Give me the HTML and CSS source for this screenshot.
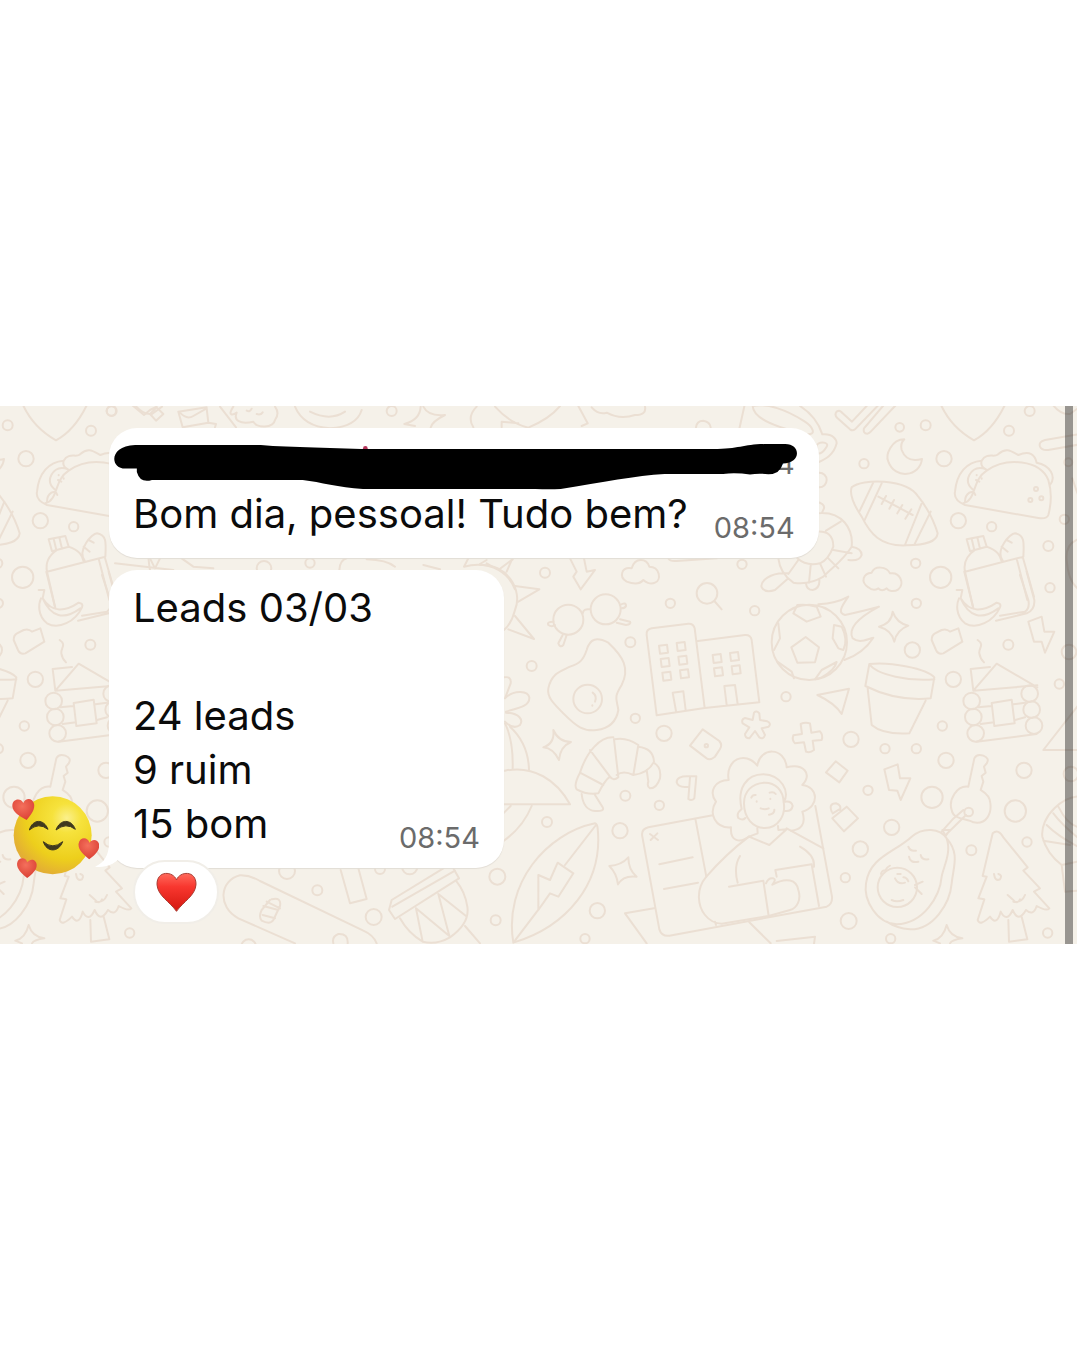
FILE: index.html
```html
<!DOCTYPE html>
<html lang="pt-BR">
<head>
    <meta charset="UTF-8">
    <meta name="viewport" content="width=device-width, initial-scale=1.0">
    <title>Leads 03/03</title>
    <link rel="stylesheet" href="styles.css">
</head>
<body>
    <main class="chat">
        <!--FONDO-->
        <svg class="wallpaper" viewBox="0 0 3231 1614" preserveAspectRatio="xMinYMin slice" aria-hidden="true">
            <defs>
                <g id="doodles">
                    <!-- top right: heart, check, moon, football, taco, float -->
                    <g transform="translate(2160 -18)">
                        <path d="M660 8Q690 80 762 121Q820 90 858 8"/>
                        <path d="M350 35Q360 28 368 40L396 65L452 5M350 35Q342 44 352 54L390 88Q398 94 405 88L485 5M500 5L432 85Q428 100 442 101Q448 100 453 94L528 15"/>
                        <path d="M75 10L55 100M98 18C100 60 180 85 262 103C290 105 280 80 250 62C200 30 140 8 98 18M240 18Q290 50 307 103C340 100 350 120 350 130C340 170 310 180 288 190M288 143C290 120 330 125 320 140Q305 165 290 160"/>
                        <path d="M553 118C515 118 495 165 505 185C525 240 600 230 606 177Q560 190 545 150Q540 130 553 118Z"/>
                        <path d="M395 262C425 235 560 235 595 290Q635 340 653 400C650 425 620 435 560 436C480 440 450 400 425 350Q385 290 395 262ZM460 247L418 335M485 250L433 362M607 305L556 432M632 335L583 434M475 290L578 345M498 288L485 312M522 300L508 326M547 315L532 340M574 328L556 356"/>
                        <path d="M730 310C770 300 755 240 800 212C860 170 960 180 985 240Q1000 290 985 345Q980 358 955 354L735 315Q700 300 705 275C710 220 740 185 785 182C800 155 825 175 835 162C860 140 875 155 895 165C930 150 945 165 950 188C990 195 1010 230 990 255M785 182Q780 200 798 208Q765 195 748 225Q735 250 760 270M735 305C735 280 760 265 766 285"/>
                        <circle cx="948" cy="267" r="6"/><circle cx="931" cy="300" r="6"/><circle cx="964" cy="295" r="6"/>
                        <path d="M770 225v1M785 235v1M768 240l10 5"/>
                        <path d="M288 340C370 330 400 390 395 440C370 480 340 500 310 530Q270 555 220 548Q180 520 175 475M288 395Q340 390 340 440Q325 480 300 490Q260 500 232 475M318 392L362 365M340 450L395 460M325 475L355 505M300 490L318 530M272 497L267 548M235 480L205 522M395 440Q425 445 425 465Q418 485 385 480M288 305Q315 310 312 325L306 338M203 520C150 515 120 545 125 562Q135 580 165 570L205 535M258 550Q260 570 278 570Q300 565 298 540"/>
                        <circle cx="298" cy="240" r="22"/>
                        <circle cx="539" cy="82" r="13"/><circle cx="617" cy="76" r="15"/><circle cx="867" cy="92" r="15"/><circle cx="929" cy="33" r="15"/><circle cx="432" cy="191" r="14"/><circle cx="672" cy="176" r="23"/><circle cx="715" cy="362" r="23"/><circle cx="815" cy="380" r="14"/><circle cx="587" cy="490" r="14"/><circle cx="662" cy="532" r="32"/><circle cx="985" cy="438" r="15"/><circle cx="66" cy="493" r="14"/><circle cx="1045" cy="187" r="12"/><circle cx="1033" cy="358" r="14"/>
                        <path d="M995 10Q1020 45 1050 42L1080 20M1080 102L975 120Q955 125 960 140Q965 152 985 150L1080 133M1057 235Q1065 260 1080 300M1080 415Q1035 430 1040 480Q1045 550 1080 570"/>
                        <path d="M445 562C420 545 430 520 455 518C465 495 500 500 510 520C540 515 555 550 535 568C520 578 505 572 500 565Q485 576 475 565Q460 575 445 562Z"/>
                        <!-- jar and bread -->
                        <path d="M735 515L910 470M740 418L790 408L800 440L750 454ZM755 416l8 34M772 412l8 34M735 515C728 480 750 460 765 450M800 440C840 455 840 470 845 485M848 482C825 450 870 400 885 400C915 405 912 430 910 470M860 420l15 8M845 440l18 15M735 515L760 625M890 476L922 600M908 470L942 590"/>
                    </g>
                    <!-- top strip -->
                    <g transform="translate(0 -18)">
                        <path d="M390 10L432 45L450 30L470 20M470 22L490 42L468 62L450 42ZM535 35L620 22M535 35L548 82M540 38Q560 60 580 48L620 25L625 68L648 72L645 82M548 82L625 68M660 20L708 82M700 20C680 50 700 45 710 38C700 60 720 75 760 65C770 85 820 85 825 60Q840 40 825 20M740 32q10 5 15-6M770 42q12 4 18-5M885 20Q910 80 990 85Q1070 80 1085 30M930 35Q990 65 1035 35"/>
                        <circle cx="334" cy="33" r="14"/>
                        <path d="M345 490L520 510M450 475L465 505L480 475M545 475L580 500L640 505"/><circle cx="792" cy="505" r="22"/><circle cx="930" cy="489" r="14"/><path d="M1018 510Q1020 480 1040 475"/>
                    </g>
                    <g transform="translate(1080 -18)">
                        <circle cx="95" cy="33" r="15"/>
                        <path d="M182 20Q180 60 133 72L165 78M190 20Q205 50 255 45Q215 65 212 83M350 20Q320 50 340 82M405 20Q450 70 505 83Q570 55 600 18M425 82V65L475 70M655 18L683 70L665 78M695 22Q715 45 740 38Q780 60 825 45Q860 45 855 20"/>
                        <path d="M1008 82Q1010 62 1030 62Q1050 65 1052 82M925 475Q930 485 950 483L1070 475M630 475L650 515L640 530L662 568L705 510L680 515L672 475"/>
                        <path d="M325 475L312 500Q370 485 415 510Q450 530 465 568M380 490L415 510L458 478M190 495L240 508M20 478Q80 480 105 500"/>
                        <circle cx="555" cy="518" r="15"/>
                        <path d="M800 545C775 530 785 500 815 505C825 470 860 475 868 500C900 500 905 540 885 548C870 555 855 545 850 540Q835 558 800 545Z"/>
                    </g>
                    <!-- middle: sun, glasses, egg, buildings -->
                    <g transform="translate(1440 462)">
                        <path d="M0 15C80 10 130 90 105 150Q95 190 72 210M105 78L178 88L115 125M105 168L162 237L85 208M0 12L20 0M95 0L80 35"/>
                        <circle cx="571" cy="130" r="14"/><circle cx="824" cy="152" r="14"/><circle cx="451" cy="247" r="15"/><circle cx="155" cy="318" r="15"/><circle cx="466" cy="475" r="14"/><circle cx="552" cy="520" r="23"/>
                        <circle cx="681" cy="100" r="31"/><path d="M703 123L725 148"/>
                        <circle cx="265" cy="179" r="45"/><circle cx="377" cy="148" r="45"/>
                        <path d="M308 160Q310 145 330 148M220 185Q200 185 205 195Q215 202 225 195M248 225L235 250Q240 265 250 255L260 225M420 135Q438 125 438 138Q435 145 424 145M420 178L450 185Q455 192 438 195L410 188"/>
                        <path d="M320 270C330 235 350 230 385 248C430 290 450 325 425 375C400 415 410 415 415 450C410 480 390 505 350 510C310 515 290 500 250 460C220 430 200 410 205 385C215 340 240 335 270 320C300 310 310 300 320 270Z"/>
                        <circle cx="323" cy="417" r="43"/><path d="M338 398Q352 408 345 425M337 436v1"/>
                        <path d="M530 466L500 225Q498 208 515 205L625 191Q640 190 644 205L674 444ZM654 243L795 225Q812 224 815 240L838 427L674 444M588 453L578 398L610 394L617 450M740 435L733 378L765 375L773 432"/>
                        <path d="M537 257l24-3l3 24l-24 3zM590 249l24-3l3 24l-24 3zM542 297l24-3l3 24l-24 3zM595 290l24-3l3 24l-24 3zM547 338l24-3l3 24l-24 3zM600 331l24-3l3 24l-24 3zM698 285l24-3l3 24l-24 3zM750 279l24-3l3 24l-24 3zM702 325l24-3l3 24l-24 3zM755 319l24-3l3 24l-24 3z"/>
                        <path d="M822 458Q830 450 838 460L840 480L862 484Q875 490 866 500L845 505L855 525Q850 540 838 532L825 513L808 535Q795 535 795 522L808 502L788 490Q783 478 795 474L818 480Z"/>
                        <path d="M668 508L718 543Q728 555 720 567L705 590Q690 602 680 595L630 557Z"/><circle cx="679" cy="557" r="5"/>
                        <path d="M220 510Q235 545 273 546Q240 560 237 600Q220 565 190 562Q225 550 220 510Z"/>
                        <path d="M72 352Q95 348 92 370L75 415M75 415C105 385 145 395 148 412C150 440 110 445 78 455M78 458C120 460 130 480 120 495Q100 510 75 485M75 490Q100 540 98 625M90 500Q145 550 147 630"/>
                    </g>
                    <!-- ball, pot, house, banana -->
                    <g transform="translate(2340 462)">
                        <circle cx="88" cy="247" r="113"/>
                        <path d="M77 231L117 262L105 307L52 308L34 262ZM40 160L52 135Q80 132 110 140L122 170L80 185ZM162 195L185 200Q205 240 190 270L175 265L158 235ZM105 358L125 330L170 306Q165 330 125 352ZM-8 305L35 335L42 355M-18 270L0 235L-5 190"/>
                        <path d="M115 133Q170 130 205 110C180 145 175 160 195 165Q240 155 297 140C250 165 200 200 218 235C235 250 260 240 280 233Q250 280 193 300"/>
                        <circle cx="409" cy="130" r="14"/><circle cx="810" cy="83" r="14"/><circle cx="397" cy="270" r="23"/><circle cx="685" cy="254" r="15"/><circle cx="520" cy="358" r="23"/><circle cx="18" cy="410" r="14"/><circle cx="487" cy="498" r="14"/><circle cx="213" cy="538" r="23"/><circle cx="315" cy="566" r="14"/><circle cx="409" cy="566" r="14"/><circle cx="867" cy="276" r="22"/><circle cx="838" cy="372" r="14"/>
                        <path d="M338 155Q350 190 385 197Q350 210 343 245Q335 210 297 200Q335 190 338 155Z"/>
                        <path d="M465 220L485 210Q500 205 510 215L535 205L547 245L490 280Q475 285 468 270L455 240Q455 225 465 220Z"/>
                        <path d="M593 240C615 255 595 265 598 280Q600 295 612 307M572 327L630 321M572 327L580 392M580 392L650 311L772 382M580 392L772 376"/>
                        <circle cx="575" cy="423" r="25"/><circle cx="580" cy="471" r="25"/><circle cx="587" cy="520" r="25"/><circle cx="749" cy="401" r="25"/><circle cx="755" cy="449" r="25"/><circle cx="762" cy="497" r="25"/>
                        <path d="M595 442L635 438M700 433L735 428M602 492L642 487M705 480L735 472M590 545L770 522M635 429L695 419L704 490L643 498Z"/>
                        <path d="M268 312C330 305 440 325 463 352L452 415Q350 425 256 378ZM268 312C290 345 390 365 463 358M263 385L275 495Q310 525 388 520L437 422"/>
                        <path d="M112 405L207 386L185 462Q165 430 112 405Z"/>
                        <path d="M62 492Q75 485 90 490L94 518L120 514Q130 525 125 540L98 542L102 570Q90 580 78 575L72 547L45 550Q35 540 40 526L66 522Z"/>
                        <path d="M530 90H547L542 115C570 160 610 155 650 128Q665 130 660 142C640 185 590 210 555 190C525 165 530 130 537 115M542 115Q580 200 655 145M580 145L553 35M648 182L740 160Q765 150 763 120L740 35M660 167L735 155Q750 145 745 120L720 45"/>
                        <path d="M745 185L785 170L793 215H823L795 278L785 245H762Z"/>
                        <path d="M915 410L790 570H910"/>
                    </g>
                    <!-- lower middle: mushroom, croissant, surfboard -->
                    <g transform="translate(1440 1032)">
                        <path d="M0 75Q40 60 75 62C160 45 230 90 270 163H60M155 168Q130 230 72 272M92 168L70 190"/>
                        <path d="M300 68L370 105M300 68C320 5 360-40 400-38M330 0L390 80Q400 95 415 82L402-32M402-32Q440-40 475-15L460 75M475-10Q520-5 522 35Q505 70 460 75Q430 60 410 75M300 68Q280 105 290 118Q320 135 355 130Q375 90 390 80M305 132Q310 180 345 183Q375 185 368 172L345 135M520 38Q545 50 540 85Q530 115 510 115Q500 110 505 95L500 60"/>
                        <circle cx="436" cy="137" r="15"/><circle cx="538" cy="166" r="14"/><circle cx="201" cy="216" r="15"/><circle cx="420" cy="242" r="23"/><circle cx="52" cy="380" r="24"/><circle cx="352" cy="482" r="23"/><circle cx="315" cy="566" r="14"/>
                        <path d="M345 220C200 250 70 400 100 578C260 530 370 400 353 235Q352 222 345 220ZM348 225L255 345M178 475L100 578M175 480V375L210 390L233 338L280 370L235 440L210 430Z"/>
                        <path d="M445 322Q445 360 470 380Q430 375 414 403Q410 370 388 348Q425 345 445 322Z"/>
                    </g>
                    <!-- woman with the laptop -->
                    <g transform="translate(1890 1002)">
                        <path d="M173 109H199L193 175Q185 184 175 177L180 112M175 109Q140 108 140 127Q145 145 177 140"/>
                        <path d="M248 226L55 262Q32 268 37 290L88 568Q95 590 118 587L590 500Q608 492 606 470L556 198M196 236L229 410M88 373L188 352M102 447L204 428M60 282l24 18M82 280l-20 20M72 505L-15 520L50 610M358 547L422 610"/>
                        <path d="M303 262C255 265 235 220 258 185C235 155 255 120 296 120C285 60 345 30 382 77C390 20 465 20 470 82C520 70 548 100 517 135C565 140 570 200 517 215C530 255 510 270 483 272M303 262C300 305 330 310 357 290"/>
                        <path d="M335 207C320 145 350 103 400 103C455 105 480 155 461 187M461 187C460 150 435 127 403 128C365 130 342 155 342 190C342 235 370 264 405 264C445 264 468 225 461 187M335 207Q318 220 325 234Q338 243 346 234M466 185Q485 183 488 198Q485 215 465 213M382 264L383 280L357 290L418 315L470 268L445 270L444 258M364 173q3-9 13-8M419 158q12-4 18 4M380 184v1M421 176v1M392 205q12 5 24 0M417 224q17-2 16-15"/>
                        <path d="M357 290Q290 340 229 410C195 450 205 500 225 525Q245 550 275 551L415 528M330 348Q310 380 323 428M297 440L400 422L416 528M440 410L436 390L545 373L567 498M408 430Q415 412 430 415Q440 418 427 434C470 410 500 420 505 450C515 480 500 505 480 510L416 528M470 265L580 325M510 320Q555 345 552 380M255 545L258 555"/>
                        <path d="M440 603L555 590L552 612"/>
                    </g>
                    <!-- lower right: key, avocado, tree -->
                    <g transform="translate(2340 1032)">
                        <path d="M167 34L203 62L178 97L138 67ZM157 205L200 170L234 205L192 244ZM155 185Q145 160 168 160Q185 165 180 180M158 190L178 178M313 58L353 43L360 85L391 85L362 150L352 122L327 120Z"/>
                        <circle cx="264" cy="121" r="14"/><circle cx="456" cy="142" r="32"/><circle cx="498" cy="31" r="23"/><circle cx="732" cy="61" r="23"/><circle cx="706" cy="183" r="32"/><circle cx="335" cy="232" r="23"/><circle cx="241" cy="297" r="23"/><circle cx="574" cy="301" r="15"/><circle cx="741" cy="276" r="14"/><circle cx="196" cy="383" r="14"/><circle cx="206" cy="513" r="24"/><circle cx="332" cy="566" r="14"/><circle cx="803" cy="549" r="14"/><circle cx="873" cy="72" r="22"/>
                        <path d="M565 110L583 25Q590 10 610 17Q630 25 620 40L612 50L617 68L605 78L610 95L602 120M565 110C530 105 505 150 515 180C520 210 560 205 580 217C620 225 635 190 631 160C630 135 610 125 602 120"/>
                        <circle cx="566" cy="186" r="13"/><path d="M558 195L500 252M550 180L518 208M518 208L485 245M487 240L510 240L497 258Z"/>
                        <path d="M395 260C430 230 480 235 500 265C515 310 490 350 485 380C480 440 430 520 350 523C290 520 250 450 258 400C270 320 340 310 395 260ZM500 265C540 310 520 350 515 400C510 460 460 540 390 538Q350 535 320 515"/>
                        <circle cx="352" cy="412" r="59"/><path d="M385 290Q390 305 408 302M387 320Q390 340 415 335M422 315Q425 330 445 328M345 385Q355 405 375 398M352 372h10M370 382q10 0 15 12M335 450Q350 458 370 450M303 372Q305 360 315 362Q322 350 330 347M405 405L428 395M405 412L425 432"/>
                        <path d="M638 250Q655 235 670 262L743 352L730 362L780 415L762 425L808 475Q800 485 770 468Q760 500 738 480Q715 520 698 480Q680 520 662 485Q650 530 630 500Q600 530 593 510L613 448L595 445L620 380L608 378ZM685 510L687 575L742 568L725 500M642 372Q645 395 660 388Q668 375 655 372M683 435L700 450Q712 465 720 448M700 455Q725 460 735 435"/>
                        <path d="M500 525Q510 560 547 565Q515 570 510 580M500 525Q490 565 460 572L480 580"/>
                        <path d="M915 140C850 130 780 200 787 260Q800 310 845 345L855 425L915 420M820 190Q850 230 915 280M800 225Q840 265 915 300M790 272L870 285M845 345L915 330M835 170Q860 220 890 230"/>
                    </g>
                    <!-- bottom left: skateboard, drum -->
                    <g transform="translate(660 1182)">
                        <circle cx="201" cy="213" r="24"/><circle cx="292" cy="271" r="15"/><circle cx="461" cy="351" r="24"/><circle cx="827" cy="361" r="15"/><circle cx="480" cy="207" r="15"/><circle cx="569" cy="200" r="23"/><circle cx="86" cy="440" r="22"/>
                        <path d="M55 355C-10 320 0 240 60 226Q90 225 120 243L430 392Q460 405 470 430M55 355L225 430M340 430Q335 410 355 402Q385 400 383 430M155 298Q185 290 180 318L160 360Q150 375 125 362Q115 350 125 330M125 330L150 300M130 318L175 330M128 345L165 355M140 305l40 20M362 210L390 310L440 297L415 205"/>
                        <path d="M507 330L525 357L717 235L700 205M507 330L515 300L670 205M517 320L705 212M540 355Q565 400 608 425Q650 435 690 412Q750 370 742 320Q735 275 710 245M608 425L588 325L688 408L655 282L738 348M735 378L780 430"/>
                    </g>
                </g>
            </defs>
            <use href="#doodles"/>
            <use href="#doodles" x="-2754"/>
        </svg>

        <!--MENSAJES-->
        <div class="message">
            <div class="bubble">
                <div class="sender"><span class="time">4</span></div>
                <div class="content">
                    <p>Bom dia, pessoal! Tudo bem?</p>
                    <time class="time">08:54</time>
                </div>
                <svg class="scribble" viewBox="327 84 2118 390" aria-hidden="true">
                    <circle cx="1092" cy="145" r="7" fill="#b5345a"/>
                    <path d="M405 135H780Q850 141 940 142L1080 147H2130C2210 147 2220 132 2290 132H2345C2393 132 2393 190 2338 190Q2330 222 2295 222Q2265 218 2240 223Q2200 217 2160 221H1985C1900 226 1800 245 1675 266Q1640 268 1600 266H1085C1010 262 960 245 905 239H455Q420 250 410 215V205H375C330 205 325 138 405 135Z"/>
                </svg>
            </div>
        </div>

        <div class="message">
            <svg class="avatar" viewBox="0 0 261 246" role="img" aria-label="Avatar">
                <defs>
                    <radialGradient id="face" cx="68%" cy="28%" r="75%">
                        <stop offset="0" stop-color="#fbf08c"/>
                        <stop offset=".25" stop-color="#f6e23c"/>
                        <stop offset=".7" stop-color="#edcf1c"/>
                        <stop offset="1" stop-color="#e3ae34"/>
                    </radialGradient>
                    <radialGradient id="love" cx="45%" cy="35%" r="65%">
                        <stop offset="0" stop-color="#f4705c"/>
                        <stop offset="1" stop-color="#dc4236"/>
                    </radialGradient>
                    <path id="loveShape" d="M0-17C-8-34-34-30-33-7C-31 12-12 22 10 34C23 19 36 2 32-15C28-33 6-34 0-17Z"/>
                </defs>
                <circle cx="122" cy="118" r="117" fill="url(#face)"/>
                <path d="M52 102C62 68 96 68 108 100Q80 78 52 102ZM132 102C144 68 178 68 190 100Q162 78 132 102ZM94 137C104 170 140 170 152 137Q122 162 94 137Z" fill="#40391e" stroke="#40391e" stroke-width="3" stroke-linejoin="round"/>
                <use href="#loveShape" fill="url(#love)" transform="translate(34 38)"/>
                <use href="#loveShape" fill="url(#love)" transform="translate(229 156) rotate(12) scale(.95)"/>
                <use href="#loveShape" fill="url(#love)" transform="translate(43 214) rotate(12) scale(.9)"/>
            </svg>
            <div class="bubble">
                <svg class="tail" viewBox="0 0 90 90" aria-hidden="true">
                    <path d="M42 0V15C42 50 28 75 0 86C30 90 55 80 70 64L90 80V0Z"/>
                </svg>
                <div class="content">
                    <p>Leads 03/03<br><br>24 leads<br>9 ruim<br>15 bom</p>
                    <time class="time">08:54</time>
                </div>
                <button class="reaction" type="button" aria-label="Amei">
                    <svg viewBox="0 0 124 122">
                        <defs>
                            <linearGradient id="heart" x1="0" y1="0" x2="0" y2="1">
                                <stop offset="0" stop-color="#ff6a5c"/>
                                <stop offset=".35" stop-color="#f8372f"/>
                                <stop offset="1" stop-color="#d3170f"/>
                            </linearGradient>
                        </defs>
                        <path d="M62 24C52-3 2-6 3 38C5 72 42 90 62 119C82 90 119 72 121 38C122-6 72-3 62 24Z" fill="url(#heart)" stroke="#a83a30" stroke-width="3"/>
                    </svg>
                </button>
            </div>
        </div>

        <div class="scrollbar"></div>
    </main>
</body>
</html>
```
FILE: styles.css
```css
* {
    box-sizing: border-box;
}
body {
    margin: 0;
    min-height: 100vh;
    display: flex;
    align-items: center;
    background-color: #fff;
    font-family: Inter, "Liberation Sans", sans-serif;
    color: #0b0b0b;
}
.chat {
    position: relative;
    flex: 1;
    display: flex;
    flex-direction: column;
    gap: 12px;
    margin-right: 3px;
    padding: 22px 24px 76px 12px;
    background-color: #f5f1e9;
    overflow: hidden;
}
.wallpaper {
    position: absolute;
    top: 0;
    left: 0;
    width: 100%;
    height: 100%;
    fill: none;
    stroke: #ebdfd3;
    stroke-width: 6;
    stroke-linecap: round;
    stroke-linejoin: round;
}
.message {
    position: relative;
    display: grid;
    grid-template-columns: 87px auto;
    column-gap: 10px;
    justify-content: start;
    align-items: end;
}
.bubble {
    position: relative;
    grid-column: 2;
    padding: 11px 24px 17px;
    border-radius: 28px;
    background-color: #fff;
    box-shadow: 0 1px 1px #e2ddd5;
}
.sender {
    height: 48px;
    padding-top: 8px;
    text-align: right;
}
.content {
    display: flex;
    align-items: flex-end;
    justify-content: space-between;
    gap: 26px;
}
.content p {
    margin: 0;
    font-size: 40px;
    line-height: 54px;
    white-space: nowrap;
}
.time {
    display: block;
    font-size: 29px;
    line-height: 34px;
    color: #6b6b6b;
}
.content .time {
    margin-bottom: -4px;
}
.scribble {
    position: absolute;
    top: 0;
    left: 0;
    width: 100%;
}
.avatar {
    width: 87px;
    margin-bottom: -10px;
}
.tail {
    position: absolute;
    left: -14px;
    bottom: 0;
    width: 30px;
    fill: #fff;
}
.reaction {
    position: absolute;
    left: 24px;
    bottom: -56px;
    display: flex;
    align-items: center;
    justify-content: center;
    width: 86px;
    height: 64px;
    padding: 0;
    border: 2px solid #f1eee8;
    border-radius: 32px;
    background-color: #fff;
}
.reaction svg {
    width: 41px;
}
.scrollbar {
    position: absolute;
    top: 0;
    right: 4px;
    bottom: 0;
    width: 8px;
    background-color: rgba(0, 0, 0, 0.38);
}
```
